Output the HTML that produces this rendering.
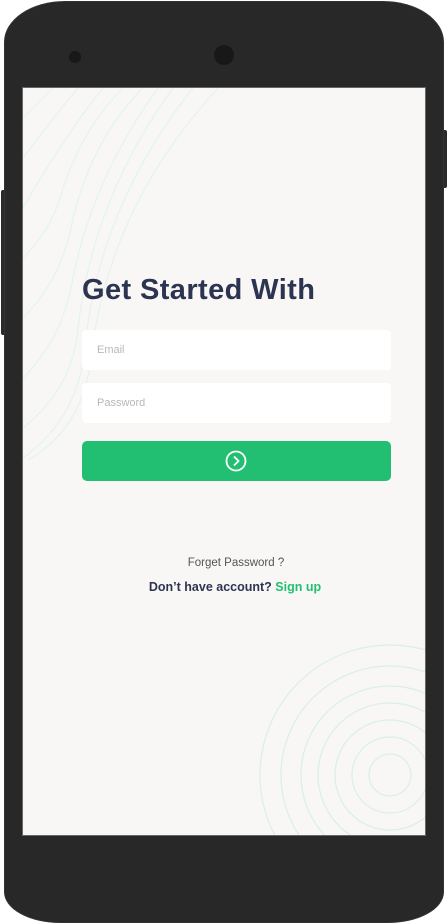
<!DOCTYPE html>
<html><head><style>
html,body{margin:0;padding:0;width:448px;height:924px;background:#fff;overflow:hidden;font-family:"Liberation Sans",sans-serif}
.phone{position:absolute;left:5px;top:2px;width:438px;height:920px;background:#282828;border-radius:60px 60px 55px 55px/40px 40px 30px 30px;box-shadow:0 0 0 1px #333}
.btnR{position:absolute;left:441px;top:130px;width:6px;height:58px;background:#2a2a2a;border-radius:2px}
.btnL{position:absolute;left:1px;top:190px;width:6px;height:145px;background:#2a2a2a;border-radius:2px}
.screen{position:absolute;left:23px;top:88px;width:402px;height:747px;background:#f8f7f5;overflow:hidden;outline:1px solid #666}
.title{position:absolute;left:59px;top:186px;font-size:29px;font-weight:bold;color:#2c3452;letter-spacing:0.4px}
.inp{position:absolute;left:59px;width:309px;height:40px;background:#fff;border-radius:4px;font-size:11px;color:#b8b8b8;line-height:40px;text-indent:15px}
.go{position:absolute;left:59px;top:353px;width:309px;height:40px;background:#22bf73;border-radius:5px}
.t1{position:absolute;left:12px;width:402px;text-align:center;font-size:11.5px;color:#555;top:469px}
.t2{position:absolute;left:11px;width:402px;text-align:center;font-size:12.5px;font-weight:bold;color:#2c3452;top:492px}
</style></head><body>
<div class="btnR"></div><div class="btnL"></div>
<div class="phone">
<div style="position:absolute;left:64px;top:49px;width:12px;height:12px;border-radius:50%;background:#181818"></div>
<div style="position:absolute;left:209px;top:43px;width:20px;height:20px;border-radius:50%;background:#181818"></div>
</div>
<div class="screen">
<svg width="402" height="747" style="position:absolute;left:0;top:0" fill="none" stroke="#e3f4eb" stroke-width="1.2">
<path d="M0 30 Q20 10 30 0"/>
<path d="M0 70 Q30 30 55 0"/>
<path d="M0 120 Q40 50 80 0"/>
<path d="M0 170 Q30 140 40 100 Q60 40 100 0"/>
<path d="M0 230 Q40 190 50 130 Q70 50 120 0"/>
<path d="M0 290 Q40 250 50 190 Q70 90 135 0"/>
<path d="M0 340 Q50 300 55 240 Q70 110 150 0"/>
<path d="M0 370 Q55 330 62 260 Q75 120 170 0"/>
<path d="M5 372 Q60 340 68 270 Q85 120 195 0"/>
<g stroke="#d9efe7">
<circle cx="367" cy="687" r="21"/><circle cx="367" cy="687" r="38"/><circle cx="367" cy="687" r="55"/><circle cx="367" cy="687" r="72"/><circle cx="367" cy="687" r="89"/><circle cx="367" cy="687" r="109"/><circle cx="367" cy="687" r="130"/>
</g></svg>
<div class="title">Get Started With</div>
<div class="inp" style="top:242px">Email</div>
<div class="inp" style="top:295px">Password</div>
<div class="go"><svg width="22" height="22" style="position:absolute;left:143px;top:9px" fill="none" stroke="#fff" stroke-width="1.8"><circle cx="11" cy="11" r="9.5"/><path d="M9 6.5 L13.5 11 L9 15.5"/></svg></div>
<div class="t1">Forget Password ?</div>
<div class="t2">Don’t have account? <span style="color:#22bf73">Sign up</span></div>
</div>
</body></html>
